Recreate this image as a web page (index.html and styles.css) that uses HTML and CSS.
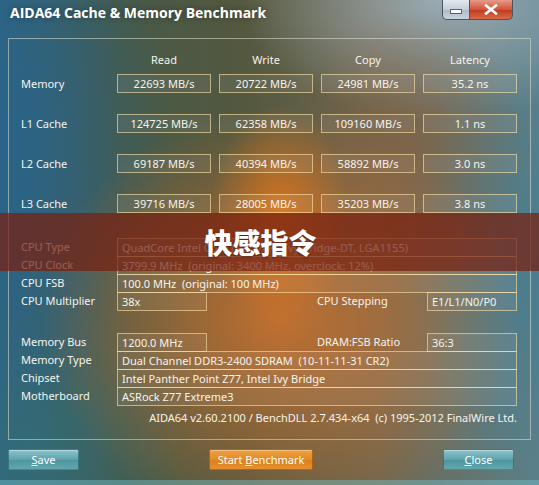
FILE: index.html
```html
<!DOCTYPE html>
<html lang="en">
<head>
    <meta charset="UTF-8">
    <meta name="viewport" content="width=device-width, initial-scale=1.0">
    <title>AIDA64 Cache &amp; Memory Benchmark</title>
    <link rel="stylesheet" href="styles.css">
</head>
<body>

    <div class="window">
        <!-- Barra de título -->
        <div class="titlebar">
            <span class="title">AIDA64 Cache &amp; Memory Benchmark</span>
            <div class="controls">
                <div class="ctl ctl-min"><span class="dash"></span></div>
                <div class="ctl ctl-close">
                    <svg width="14" height="11" viewBox="0 0 14 11">
                        <path d="M2 1.5 L12 9.5 M12 1.5 L2 9.5" stroke="#fff" stroke-width="2.6" stroke-linecap="square" fill="none"/>
                    </svg>
                </div>
            </div>
        </div>

        <div class="panel">
            <!-- Resultados del benchmark -->
            <div class="bench-head">
                <span></span>
                <span>Read</span>
                <span>Write</span>
                <span>Copy</span>
                <span>Latency</span>
            </div>
            <div class="bench">
                <span class="label">Memory</span>
                <span class="cell">22693 MB/s</span>
                <span class="cell">20722 MB/s</span>
                <span class="cell">24981 MB/s</span>
                <span class="cell">35.2 ns</span>

                <span class="label">L1 Cache</span>
                <span class="cell">124725 MB/s</span>
                <span class="cell">62358 MB/s</span>
                <span class="cell">109160 MB/s</span>
                <span class="cell">1.1 ns</span>

                <span class="label">L2 Cache</span>
                <span class="cell">69187 MB/s</span>
                <span class="cell">40394 MB/s</span>
                <span class="cell">58892 MB/s</span>
                <span class="cell">3.0 ns</span>

                <span class="label">L3 Cache</span>
                <span class="cell">39716 MB/s</span>
                <span class="cell">28005 MB/s</span>
                <span class="cell">35203 MB/s</span>
                <span class="cell">3.8 ns</span>
            </div>

            <!-- Información del sistema -->
            <div class="info">
                <div class="row">
                    <span class="label">CPU Type</span>
                    <span class="val">QuadCore Intel Core i5-3570K  (Ivy Bridge-DT, LGA1155)</span>
                </div>
                <div class="row">
                    <span class="label">CPU Clock</span>
                    <span class="val">3799.9 MHz  (original: 3400 MHz, overclock: 12%)</span>
                </div>
                <div class="row">
                    <span class="label">CPU FSB</span>
                    <span class="val">100.0 MHz  (original: 100 MHz)</span>
                </div>
                <div class="row split">
                    <span class="label">CPU Multiplier</span>
                    <span class="val">38x</span>
                    <span class="label mid">CPU Stepping</span>
                    <span class="val">E1/L1/N0/P0</span>
                </div>
            </div>

            <div class="info">
                <div class="row split">
                    <span class="label">Memory Bus</span>
                    <span class="val">1200.0 MHz</span>
                    <span class="label mid">DRAM:FSB Ratio</span>
                    <span class="val">36:3</span>
                </div>
                <div class="row">
                    <span class="label">Memory Type</span>
                    <span class="val">Dual Channel DDR3-2400 SDRAM  (10-11-11-31 CR2)</span>
                </div>
                <div class="row">
                    <span class="label">Chipset</span>
                    <span class="val">Intel Panther Point Z77, Intel Ivy Bridge</span>
                </div>
                <div class="row">
                    <span class="label">Motherboard</span>
                    <span class="val">ASRock Z77 Extreme3</span>
                </div>
            </div>

            <div class="version">AIDA64 v2.60.2100 / BenchDLL 2.7.434-x64  (c) 1995-2012 FinalWire Ltd.</div>
        </div>

        <!-- Botones -->
        <div class="buttons">
            <button class="btn"><u>S</u>ave</button>
            <button class="btn btn-start">Start <u>B</u>enchmark</button>
            <button class="btn"><u>C</u>lose</button>
        </div>

        <div class="frame-bottom"></div>

        <div class="banner">快感指令</div>
    </div>

</body>
</html>
```

FILE: styles.css
```css
body {
    margin: 0;
    font-family: "Noto Sans", "Open Sans", sans-serif;
    font-size: 11px;
    color: #f6f4ee;
}
.window {
    position: relative;
    width: 539px;
    height: 485px;
    overflow: hidden;
    background:
        radial-gradient(ellipse 70px 110px at 280px 215px, rgba(235, 120, 20, 0.75), rgba(235, 120, 20, 0) 100%),
        radial-gradient(ellipse 240px 210px at 280px 320px, rgba(210, 115, 45, 0.85), rgba(210, 115, 45, 0) 100%),
        radial-gradient(ellipse 120px 140px at 410px 150px, rgba(140, 95, 60, 0.55), rgba(140, 95, 60, 0) 100%),
        radial-gradient(ellipse 200px 120px at 440px 0px, rgba(170, 190, 205, 0.75), rgba(170, 190, 205, 0) 100%),
        radial-gradient(ellipse 170px 280px at 0px 140px, rgba(40, 100, 140, 0.8), rgba(40, 100, 140, 0) 100%),
        radial-gradient(ellipse 130px 240px at 539px 270px, rgba(70, 125, 145, 0.85), rgba(70, 125, 145, 0) 100%),
        radial-gradient(ellipse 150px 150px at 30px 450px, rgba(50, 110, 120, 0.75), rgba(50, 110, 120, 0) 100%),
        linear-gradient(90deg, #2f6480 0%, #465a48 22%, #54583f 45%, #6d6650 70%, #5d8088 100%);
}
.titlebar {
    display: flex;
    justify-content: space-between;
    height: 38px;
}
.title {
    padding: 3px 0 0 10px;
    font-family: "Open Sans", sans-serif;
    font-weight: 700;
    font-size: 14px;
    line-height: 20px;
    color: #fff;
    text-shadow: 0 0 6px rgba(0, 0, 0, 0.35);
}
.controls {
    display: flex;
    margin-right: 26px;
    height: 20px;
}
.ctl {
    display: flex;
    align-items: center;
    justify-content: center;
    box-sizing: border-box;
    height: 20px;
    border: 1px solid #4a5560;
    border-top: none;
}
.ctl-min {
    width: 28px;
    border-radius: 0 0 0 5px;
    background: linear-gradient(#e4eaef, #c3ced6 50%, #aebbc6 51%, #c8d4dc);
}
.dash {
    width: 10px;
    height: 3px;
    margin-top: 4px;
    background: #fff;
    border: 1px solid #56626c;
}
.ctl-close {
    width: 43px;
    border-left: none;
    border-radius: 0 0 5px 0;
    background: linear-gradient(#e89a88, #d0543a 50%, #bf3a1e 51%, #d86a48);
}
.panel {
    margin: 0 8px 0 8px;
    height: 402px;
    box-sizing: border-box;
    border: 1px solid rgba(225, 225, 210, 0.55);
    padding: 13px 12px 0 12px;
}
.bench-head,
.bench {
    display: grid;
    grid-template-columns: 88px repeat(4, 94px);
    column-gap: 8px;
}
.bench-head {
    line-height: 15px;
    text-align: center;
    margin-bottom: 7px;
}
.bench {
    row-gap: 21px;
}
.label {
    line-height: 19px;
}
.cell {
    box-sizing: border-box;
    height: 19px;
    line-height: 17px;
    text-align: center;
    border: 1px solid rgba(255, 230, 170, 0.6);
    background: rgba(255, 255, 255, 0.07);
}
.info {
    margin-top: 25px;
}
.info + .info {
    margin-top: 22px;
}
.row {
    display: grid;
    grid-template-columns: 96px 400px;
}
.row + .row {
    margin-top: -1px;
}
.row.split {
    grid-template-columns: 96px 90px 220px 90px;
}
.row .label {
    line-height: 18px;
}
.row .mid {
    padding-left: 110px;
}
.val {
    box-sizing: border-box;
    height: 19px;
    line-height: 17px;
    padding: 0 4px;
    white-space: pre;
    overflow: hidden;
    border: 1px solid rgba(255, 225, 170, 0.6);
    background: rgba(255, 255, 255, 0.06);
}
.version {
    margin-top: 5px;
    width: 496px;
    text-align: right;
    white-space: pre;
    line-height: 14px;
}
.buttons {
    display: flex;
    justify-content: space-between;
    align-items: center;
    padding: 9px 25px 0 8px;
}
.btn {
    width: 71px;
    height: 21px;
    padding: 0;
    font-family: "Noto Sans", sans-serif;
    font-size: 11px;
    color: #fff;
    border: 1px solid rgba(40, 90, 100, 0.6);
    border-radius: 2px;
    background: linear-gradient(#8cc4cc, #5fa3ad 50%, #4e959f 51%, #62a6ae);
    box-shadow: inset 0 1px 0 rgba(255, 255, 255, 0.35);
}
.btn-start {
    width: 104px;
    border-color: rgba(150, 80, 20, 0.7);
    background: linear-gradient(#f0a040, #e48a25 50%, #db7f1a 51%, #e69030);
}
.frame-bottom {
    position: absolute;
    left: 0;
    right: 0;
    bottom: 0;
    height: 5px;
    background: rgba(120, 190, 200, 0.45);
}
.banner {
    position: absolute;
    left: 0;
    top: 213px;
    width: 539px;
    height: 58px;
    box-sizing: border-box;
    padding-right: 18px;
    background: rgba(118, 32, 16, 0.72);
    color: #fff;
    font-family: "Noto Sans CJK SC", sans-serif;
    font-weight: 900;
    font-size: 28px;
    line-height: 58px;
    text-align: center;
    text-shadow: 0 1px 2px rgba(0, 0, 0, 0.4);
}
```
